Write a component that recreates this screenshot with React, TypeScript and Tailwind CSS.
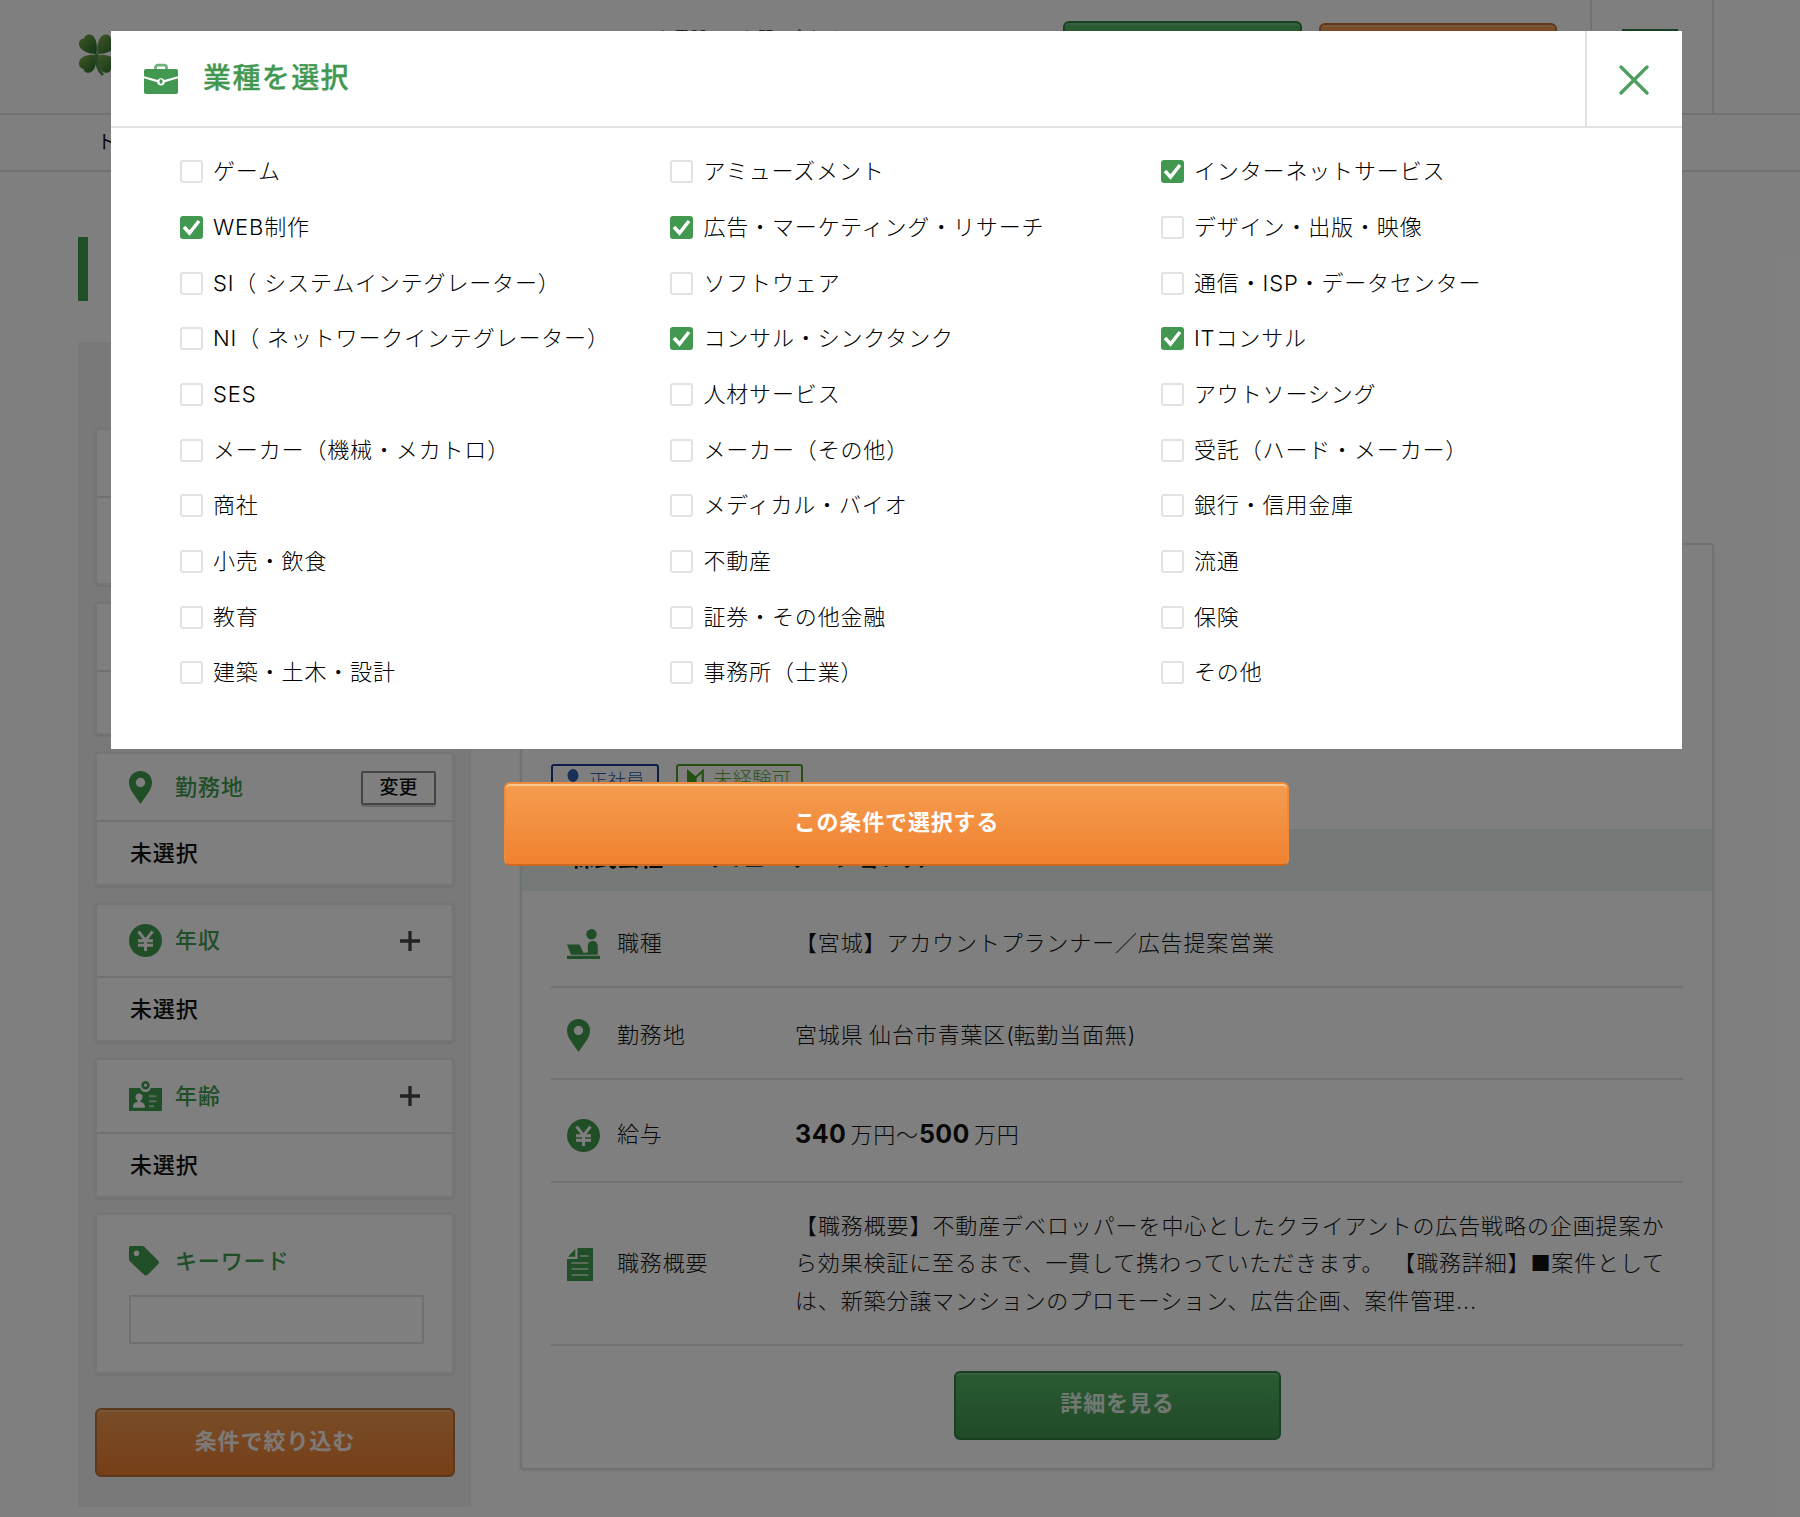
import type { ReactNode } from "react";

const JP = "font-['Inter','Noto_Sans_CJK_JP',sans-serif]";

const industries: [string, boolean][] = [
  ["ゲーム", false],
  ["アミューズメント", false],
  ["インターネットサービス", true],
  ["WEB制作", true],
  ["広告・マーケティング・リサーチ", true],
  ["デザイン・出版・映像", false],
  ["SI（ システムインテグレーター）", false],
  ["ソフトウェア", false],
  ["通信・ISP・データセンター", false],
  ["NI（ ネットワークインテグレーター）", false],
  ["コンサル・シンクタンク", true],
  ["ITコンサル", true],
  ["SES", false],
  ["人材サービス", false],
  ["アウトソーシング", false],
  ["メーカー（機械・メカトロ）", false],
  ["メーカー（その他）", false],
  ["受託（ハード・メーカー）", false],
  ["商社", false],
  ["メディカル・バイオ", false],
  ["銀行・信用金庫", false],
  ["小売・飲食", false],
  ["不動産", false],
  ["流通", false],
  ["教育", false],
  ["証券・その他金融", false],
  ["保険", false],
  ["建築・土木・設計", false],
  ["事務所（士業）", false],
  ["その他", false],
];

function PinIcon() {
  return (
    <svg viewBox="0 0 23 33" className="h-[33px] w-[23px]">
      <path fillRule="evenodd" fill="#409c4f" d="M11.5 0C5.1 0 0 5.1 0 11.4 0 15 1.500 18.300 3.500 21.500L11.500 33l8-11.500c2-3.200 3.500-6.500 3.500-10.100C23 5.100 17.900 0 11.500 0Zm0 6.800a4.700 4.700 0 1 1 0 9.400 4.700 4.700 0 0 1 0-9.400Z" />
    </svg>
  );
}

function YenIcon() {
  return (
    <svg viewBox="0 0 33 33" className="h-[33px] w-[33px]">
      <circle cx="16.500" cy="16.500" r="16.500" fill="#409c4f" />
      <path d="M9.500 7.500 16.500 16.500 23.500 7.500M16.500 16V27M9 16.700h15M9 21.300h15" fill="none" stroke="#fff" strokeWidth="2.900" />
    </svg>
  );
}

function BadgeIcon() {
  return (
    <svg viewBox="0 0 33 30" className="h-[30px] w-[33px]">
      <path fill="#409c4f" d="M0 7h11.200a5.500 5.500 0 0 0 10.600 0H33v23H0z" />
      <circle cx="16.500" cy="4.200" r="2.900" fill="none" stroke="#409c4f" strokeWidth="2.600" />
      <circle cx="10" cy="16" r="3.500" fill="#fff" />
      <path fill="#fff" d="M8.500 18h3v3c3 .6 4.500 2 4.500 5.800H4c0-3.800 1.500-5.200 4.500-5.800z" />
      <path d="M20 15.300h7.500M20 20.300h7.500M20 25.300h5" stroke="#fff" strokeOpacity=".6" strokeWidth="1.900" />
    </svg>
  );
}

function TagIcon() {
  return (
    <svg viewBox="0 0 30 30" className="h-[30px] w-[30px]">
      <path fillRule="evenodd" fill="#409c4f" d="M1.800 0H13c1 0 1.800.3 2.500 1L29 14.500c1.200 1.200 1.200 2.500 0 3.700L18.700 28.800c-1.100 1.100-2.500 1.100-3.600 0L1 15.500C.3 14.800 0 14 0 13V1.800C0 .7.700 0 1.800 0Zm5.700 4.500a2.800 2.800 0 1 0 0 5.600 2.800 2.800 0 0 0 0-5.600Z" />
    </svg>
  );
}

function DeskIcon() {
  return (
    <svg viewBox="0 0 33 30" className="h-[30px] w-[33px]" fill="#409c4f">
      <circle cx="24.500" cy="5.200" r="5.200" />
      <path d="M0 26.700h33V30H0zM0 15.500h12.500l3.800 8.200h3.700l1.200-1.200c-1.200-6.500-.2-10.500 4.800-10.500 3.400 0 4.800 2.500 4.800 5.500v8.200H4z" />
    </svg>
  );
}

function DocumentIcon() {
  return (
    <svg viewBox="0 0 26 33" className="h-[33px] w-[26px]">
      <path fill="#409c4f" d="M10.500 0H26v33H0V11h10.500z" />
      <path fill="#409c4f" d="M8.300 1v7.800H1z" />
      <path d="M13 8h8.500M4.500 15h17M4.500 21h17M4.500 27h17" stroke="#fff" strokeOpacity=".6" strokeWidth="2" />
    </svg>
  );
}

function BriefcaseIcon() {
  return (
    <svg viewBox="0 0 34 32" className="h-[32px] w-[34px]">
      <path d="M11.500 6V4.500a2.300 2.300 0 0 1 2.300-2.300h6.400a2.300 2.300 0 0 1 2.300 2.300V6" fill="none" stroke="#6fb27b" strokeWidth="2.800" />
      <path fill="#429850" d="M2 6h30a2 2 0 0 1 2 2v5.300l-13.700 3.800c-1.300-2.400-5.300-2.400-6.600 0L0 13.300V8a2 2 0 0 1 2-2z" />
      <path fill="#429850" d="M0 15.300l13.200 3.900c.4 4.300 7.200 4.300 7.600 0L34 15.300V29a2 2 0 0 1-2 2H2a2 2 0 0 1-2-2z" />
      <ellipse cx="17" cy="18.500" rx="1.500" ry="2.300" fill="#429850" />
    </svg>
  );
}

function CloverIcon() {
  return (
    <svg viewBox="0 0 44 46" className="h-[46px] w-[44px]">
      <defs>
        <linearGradient id="leaf" x1="0" y1="0" x2="1" y2="1">
          <stop offset="0" stopColor="#84ae4c" />
          <stop offset="1" stopColor="#1f6a30" />
        </linearGradient>
      </defs>
      <g fill="url(#leaf)">
        <path d="M17.500 20C10 20 1 17 0 10.500-.500 6 2.500 4.500 5 4.500 5.500 1.500 8.500-.500 12 .800 18 3 18.500 13 17.500 20Z" />
        <path d="M18.500 20C17.500 13 19 3 25 .800 28.500-.500 31.500 1.500 32 4.500 35 5 38 7 37 11 35.500 17 26 20 18.500 20Z" />
        <path d="M17.500 21C18 28 16 37 11 38.500 7.500 39.500 5 38 4.500 35 1.500 34.500-.500 32 0 28.500 1 22 10 20 17.500 21Z" />
        <path d="M18.500 21C26 20 35 22 37 28.500 38 32 35 34.500 32 35 31.500 38 29 39.500 25.500 38.500 20 37 18 28 18.500 21Z" />
      </g>
      <path d="M17.500 20c0 10 1 16 6.500 21" fill="none" stroke="#4f9048" strokeWidth="3" />
    </svg>
  );
}

function ConditionCard({
  icon,
  title,
  action,
  className,
  valueClassName = "h-[63px]",
}: {
  icon: ReactNode;
  title: string;
  action?: "change" | "open";
  className: string;
  valueClassName?: string;
}) {
  return (
    <section className={`flex flex-col rounded-[4px] border-2 border-[#ebebeb] bg-white shadow-[0_1px_3px_rgba(0,0,0,0.12)] ${className}`}>
      <div className="flex grow items-center border-b-2 border-[#e2e2e2] pl-[32px]">
        <div className="flex w-[46px] items-center">{icon}</div>
        <h3 className="grow pb-px text-[22px] leading-none font-medium tracking-[0.950px] text-[#409c4f]">{title}</h3>
        {action === "change" && (
          <button className="mt-px mr-[16px] h-[34px] w-[75px] rounded-[2px] border-2 border-[#888] bg-white text-[19px] leading-none font-medium shadow-[0_2px_0_#d0d0d0]">変更</button>
        )}
        {action === "open" && (
          <svg viewBox="0 0 20 20" className="mr-[32px] h-5 w-5">
            <path d="M10 0v20M0 10h20" stroke="#444" strokeWidth="3.300" />
          </svg>
        )}
      </div>
      <p className={`flex shrink-0 items-center pb-px pl-[33px] text-[22px] leading-none font-medium tracking-[0.850px] ${valueClassName}`}>未選択</p>
    </section>
  );
}

function DetailRow({ icon, label, children, className }: { icon: ReactNode; label: string; children: ReactNode; className: string }) {
  return (
    <div className={`flex items-center border-b-2 border-[#e2e2e2] pl-[16px] ${className}`}>
      <div className="flex w-[50px] items-center">{icon}</div>
      <dt className="w-[178px] shrink-0">{label}</dt>
      <dd className="whitespace-nowrap">{children}</dd>
    </div>
  );
}

function Page() {
  return (
    <div className="flex h-[1517px] flex-col overflow-hidden bg-white">
      <header className="flex h-[115px] shrink-0 items-start border-b-2 border-[#e2e2e2] pl-[79px]">
        <div className="w-[578px] pt-[34px]">
          <CloverIcon />
        </div>
        <p className="w-[406px] pt-[29px] text-[16px] leading-none tracking-[0.8px]">お電話でのお問い合わせ</p>
        <div className="mt-[21px] h-[68px] w-[239px] shrink-0 rounded-[6px] border-2 border-[#2c8040] bg-linear-to-b from-[#54b464] to-[#429650] shadow-[inset_0_2px_0_#78bc84]" />
        <div className="mt-[23px] ml-[17px] h-[68px] w-[238px] shrink-0 rounded-[6px] border-2 border-[#b87038] bg-linear-to-b from-[#f09a50] to-[#ee7e30] shadow-[inset_0_2px_0_#f4ac70]" />
        <div className="ml-[33px] flex h-full w-[124px] shrink-0 justify-center border-x-2 border-[#e2e2e2] pt-[29px]">
          <div className="ml-[-4px] h-[6px] w-[56px] bg-[#2c8040]" />
        </div>
      </header>
      <nav className="flex h-[57px] shrink-0 items-center border-b-2 border-[#e2e2e2] pb-[1px] pl-[97px] text-[19px] leading-none font-normal">トップ</nav>

      <div className="mt-[65px] ml-[78px] h-[64px] w-[10px] shrink-0 bg-[#409c4f]" />

      <div className="flex items-start pl-[78px]">
        <aside className="mt-[41px] flex h-[1165px] w-[393px] shrink-0 flex-col bg-[#f3f3f3] px-[17px] pt-[86px]">
          <ConditionCard icon={<DeskIcon />} title="職種" className="h-[157px]" valueClassName="h-[85px]" />
          <ConditionCard icon={<DocumentIcon />} title="業種" className="mt-[17px] h-[133px]" valueClassName="h-[61px]" />
          <ConditionCard icon={<PinIcon />} title="勤務地" action="change" className="mt-[17px] h-[134px]" valueClassName="h-[62px]" />
          <ConditionCard icon={<YenIcon />} title="年収" action="open" className="mt-[17px] h-[139px]" valueClassName="h-[62px]" />
          <ConditionCard icon={<BadgeIcon />} title="年齢" action="open" className="mt-[16px] h-[140px]" valueClassName="h-[62px]" />
          <section className="mt-[15px] h-[161px] rounded-[4px] border-2 border-[#ebebeb] bg-white pt-[31px] pl-[32px] shadow-[0_1px_3px_rgba(0,0,0,0.12)]">
            <div className="flex items-center">
              <div className="flex w-[46px]">
                <TagIcon />
              </div>
              <h3 className="pb-[1px] text-[22px] leading-none font-medium tracking-[0.850px] text-[#409c4f]">キーワード</h3>
            </div>
            <div className="mt-[19px] h-[49px] w-[295px] rounded-[2px] border-2 border-[#e0e0e0] bg-white" />
          </section>
          <button className="mt-[34px] h-[69px] w-[360px] rounded-[6px] border-2 border-[#b87038] bg-linear-to-b from-[#f09a50] to-[#ee7e30] pb-[3px] text-[22px] font-bold tracking-[0.950px] text-white/90 shadow-[inset_0_2px_0_#f4ac70]">
            条件で絞り込む
          </button>
        </aside>

        <main className="mt-[242px] ml-[49px] h-[927px] w-[1194px] shrink-0 rounded-[4px] border-2 border-[#e4e4e4] shadow-[0_1px_3px_rgba(0,0,0,0.1)]">
          <div className="flex h-[284px] items-start gap-[17px] pt-[219px] pl-[29px]">
            <div className="flex h-[32px] w-[108px] items-center rounded-[3px] border-2 border-[#1c3c8c] pl-[14px] text-[18.500px] leading-none whitespace-nowrap text-[#2c5cb0]">
              <svg viewBox="0 0 12 22" className="mr-[10px] h-[22px] w-[12px]" fill="#3060b0">
                <ellipse cx="6" cy="6.500" rx="5.500" ry="6.500" />
                <path d="M0 22c0-6 2-8.500 6-8.500s6 2.500 6 8.500z" />
              </svg>
              正社員
            </div>
            <div className="flex h-[32px] w-[127px] items-center rounded-[3px] border-2 border-[#4c9c28] pl-[9px] text-[19.500px] leading-none whitespace-nowrap text-[#5cae38]">
              <svg viewBox="0 0 17 22" className="mr-[9px] h-[22px] w-[17px]">
                <path fill="#48a028" d="M0 0l8.500 7v15L0 15z" />
                <path fill="none" stroke="#48a028" strokeWidth="2.200" d="M8.500 8.500 15.800 2v13l-7.300 6z" />
              </svg>
              未経験可
            </div>
          </div>
          <div className="flex h-[62px] items-center bg-[#ebf5f1] pb-[3px] pl-[49px] text-[23px] leading-none font-bold">株式会社DGコミュニケーションズ</div>
          <dl className="mx-[29px] text-[22px] leading-[37.500px] tracking-[0.850px]">
            <DetailRow icon={<DeskIcon />} label="職種" className="h-[97px] pt-[10px]">
              【宮城】アカウントプランナー／広告提案営業
            </DetailRow>
            <DetailRow icon={<PinIcon />} label="勤務地" className="h-[92px] pt-[5px]">
              <span className="[word-spacing:-1.5px]">
                宮城県 仙台市青葉区<span className="tracking-[-0.5px]">(</span>転勤当面無<span className="tracking-normal">)</span>
              </span>
            </DetailRow>
            <DetailRow icon={<YenIcon />} label="給与" className="h-[103px] pt-[9px]">
              <b className="mr-[4px] text-[25px] font-bold tracking-[0.5px]">340</b>万円〜<b className="mr-[4px] text-[25px] font-bold tracking-[0.4px]">500</b>万円
            </DetailRow>
            <DetailRow icon={<DocumentIcon />} label="職務概要" className="h-[163px] pt-[1px]">
              <span className="tracking-[0.900px]">【職務概要】不動産デベロッパーを中心としたクライアントの広告戦略の企画提案か</span>
              <br />
              <span className="[word-spacing:2px]">ら効果検証に至るまで、一貫して携わっていただきます。 【職務詳細】■案件として</span>
              <br />
              は、新築分譲マンションのプロモーション、広告企画、案件管理...
            </DetailRow>
          </dl>
          <button className="mt-[25px] ml-[432px] h-[69px] w-[327px] rounded-[6px] border-2 border-[#2c8040] bg-linear-to-b from-[#54b464] to-[#429650] pb-[4px] text-[22px] font-bold tracking-[0.850px] text-white/85 shadow-[inset_0_2px_0_#78bc84]">
            詳細を見る
          </button>
        </main>
      </div>
    </div>
  );
}

function IndustryDialog() {
  return (
    <div className="absolute inset-0 flex flex-col overflow-hidden bg-black/50 pt-[31px]">
      <div className="ml-[111px] h-[718px] w-[1571px] bg-white">
        <div className="flex h-[97px] border-b-2 border-[#e2e2e2]">
          <div className="flex grow items-center pl-[33px]">
            <BriefcaseIcon />
            <h2 className="ml-[25px] pb-[2px] text-[28px] leading-none font-medium tracking-[1.400px] text-[#429850] [-webkit-text-stroke:0.3px_#429850]">業種を選択</h2>
          </div>
          <button className="flex w-[97px] items-center justify-center border-l-2 border-[#e2e2e2]">
            <svg viewBox="0 0 30 30" className="mt-[3px] mr-[2px] h-[30px] w-[30px]">
              <path d="M2 2 28 28M28 2 2 28" stroke="#4f9f5c" strokeWidth="3.300" strokeLinecap="round" />
            </svg>
          </button>
        </div>
        <div className="grid auto-rows-[55.66px] grid-cols-[490.4px_490.6px_490.5px] pt-[16px] pl-[69px]">
          {industries.map(([label, checked]) => (
            <label key={label} className="flex items-center text-[22px] leading-none tracking-[0.850px] whitespace-nowrap text-black">
              {checked ? (
                <span className="mr-[10px] flex h-[23px] w-[23px] items-center justify-center rounded-[3px] bg-[#429850]">
                  <svg viewBox="0 0 23 23" className="h-[23px] w-[23px]">
                    <path d="M4 11 9.500 17 19 5" fill="none" stroke="#fff" strokeWidth="3.500" />
                  </svg>
                </span>
              ) : (
                <span className="mr-[10px] h-[23px] w-[23px] rounded-[3px] border-2 border-[#e2e2e2] bg-white" />
              )}
              <span className="pb-px">{label}</span>
            </label>
          ))}
        </div>
      </div>
      <button className="mt-[33px] ml-[504px] h-[84px] w-[785px] shrink-0 rounded-[6px] border-2 border-x-[#ee8a3c] border-t-[#ee8a3c] border-b-[#cc6820] bg-linear-to-b from-[#f59c4e] to-[#f08230] pb-[3px] text-[22px] font-bold tracking-[0.850px] text-white shadow-[inset_0_2px_0_#fac890]">
        この条件で選択する
      </button>
    </div>
  );
}

export default function App() {
  return (
    <div lang="ja" className={`relative h-[1517px] w-[1800px] overflow-hidden font-light text-[#111] ${JP}`}>
      <Page />
      <IndustryDialog />
    </div>
  );
}
